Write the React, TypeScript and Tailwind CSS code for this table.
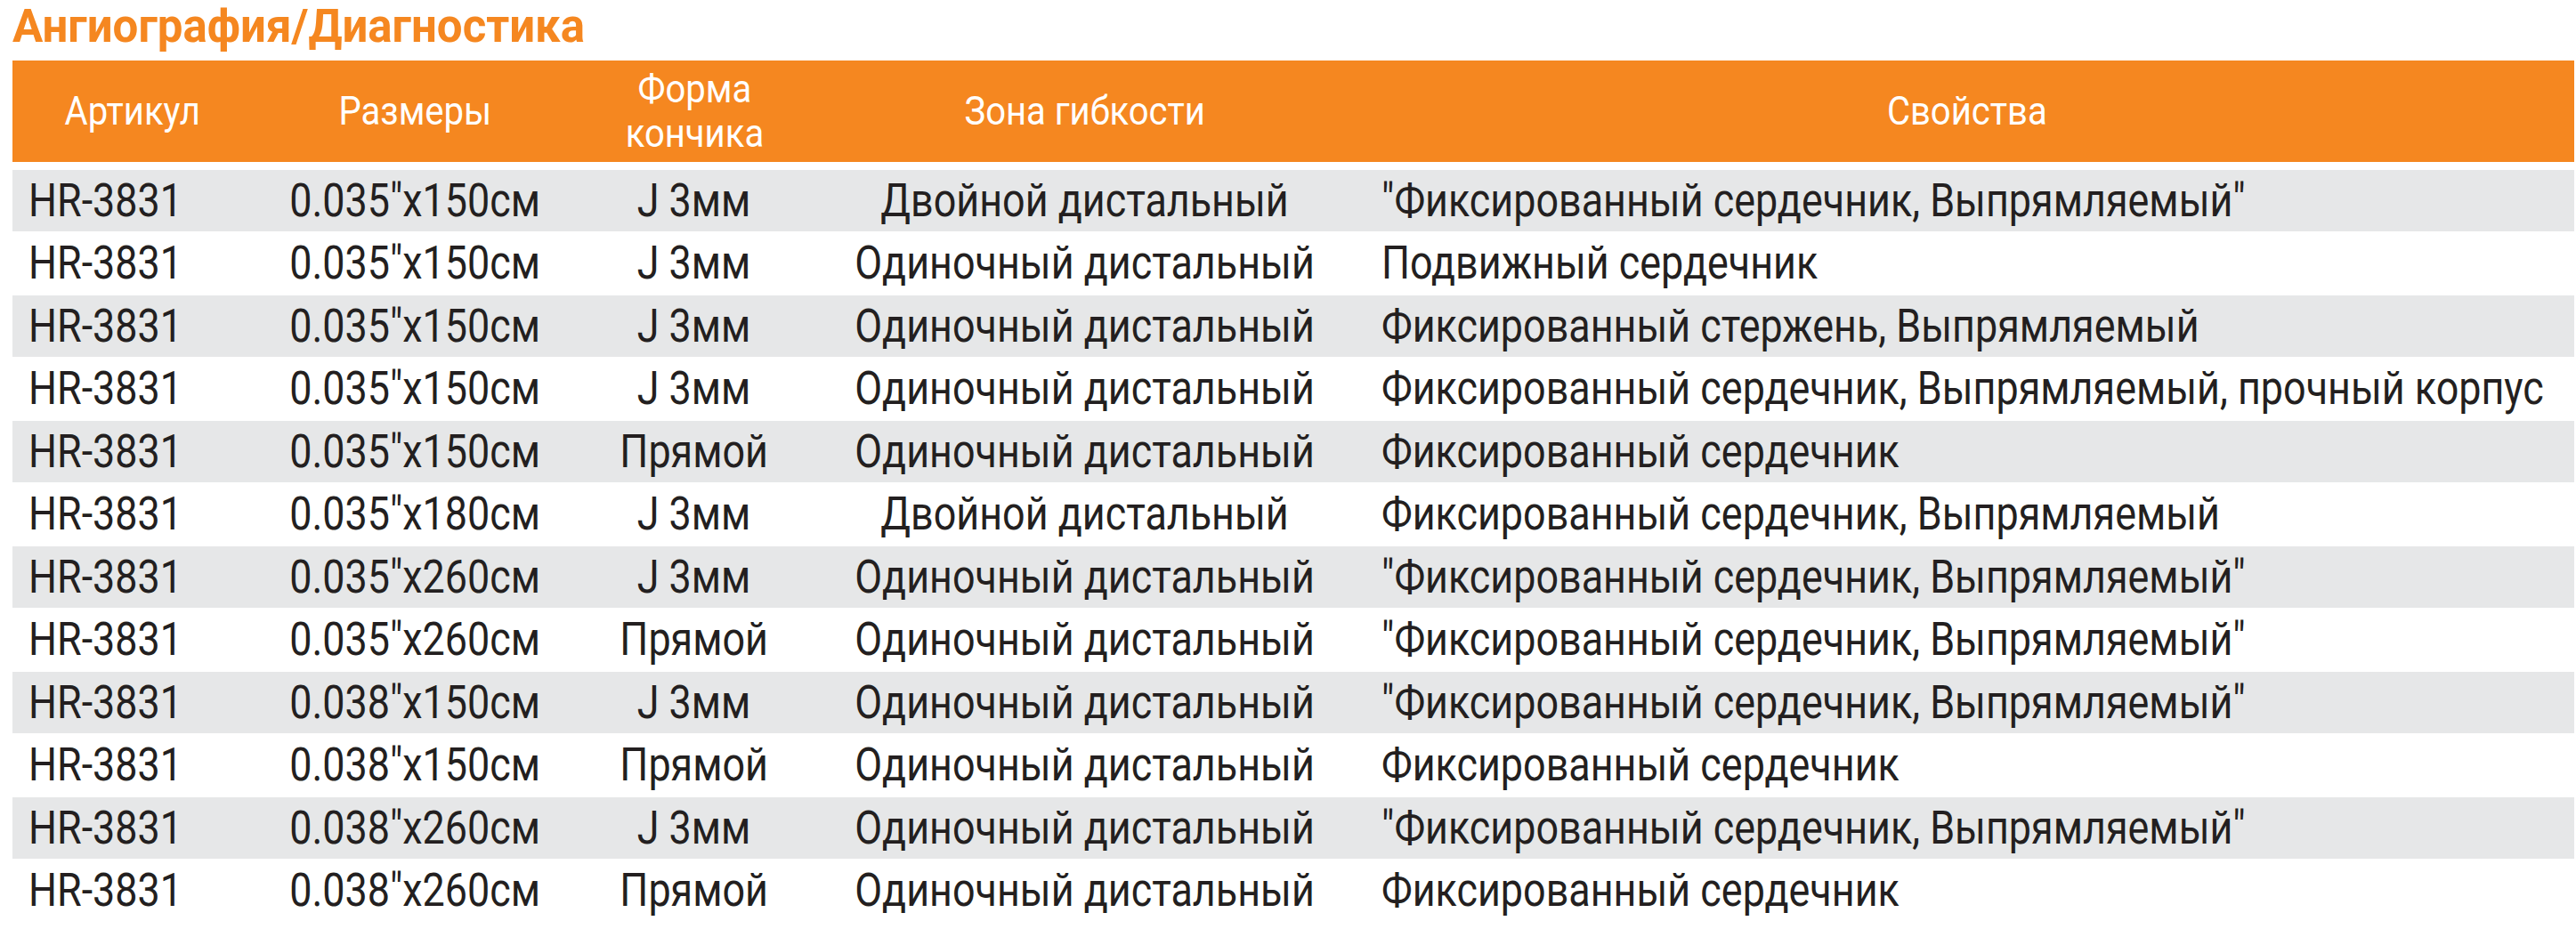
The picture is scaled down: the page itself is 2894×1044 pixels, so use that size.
import React from 'react';

// --- Data ---

type Row = [string, string, string, string, string];

const rows: Row[] = [
  ['HR-3831', '0.035"x150см', 'J 3мм', 'Двойной дистальный', '"Фиксированный сердечник, Выпрямляемый"'],
  ['HR-3831', '0.035"x150см', 'J 3мм', 'Одиночный дистальный', 'Подвижный сердечник'],
  ['HR-3831', '0.035"x150см', 'J 3мм', 'Одиночный дистальный', 'Фиксированный стержень, Выпрямляемый'],
  ['HR-3831', '0.035"x150см', 'J 3мм', 'Одиночный дистальный', 'Фиксированный сердечник, Выпрямляемый, прочный корпус'],
  ['HR-3831', '0.035"x150см', 'Прямой', 'Одиночный дистальный', 'Фиксированный сердечник'],
  ['HR-3831', '0.035"x180см', 'J 3мм', 'Двойной дистальный', 'Фиксированный сердечник, Выпрямляемый'],
  ['HR-3831', '0.035"x260см', 'J 3мм', 'Одиночный дистальный', '"Фиксированный сердечник, Выпрямляемый"'],
  ['HR-3831', '0.035"x260см', 'Прямой', 'Одиночный дистальный', '"Фиксированный сердечник, Выпрямляемый"'],
  ['HR-3831', '0.038"x150см', 'J 3мм', 'Одиночный дистальный', '"Фиксированный сердечник, Выпрямляемый"'],
  ['HR-3831', '0.038"x150см', 'Прямой', 'Одиночный дистальный', 'Фиксированный сердечник'],
  ['HR-3831', '0.038"x260см', 'J 3мм', 'Одиночный дистальный', '"Фиксированный сердечник, Выпрямляемый"'],
  ['HR-3831', '0.038"x260см', 'Прямой', 'Одиночный дистальный', 'Фиксированный сердечник'],
];

const cols = 'grid grid-cols-[270px_365px_262px_616px_1fr]';

// condensed look: the catalogue face is narrower than Roboto
const Cell: React.FC<{ text: string; left?: boolean; pad?: string }> = ({ text, left, pad }) => (
  <div className={`flex items-center ${left ? pad : 'justify-center'}`}>
    <span className={`inline-block scale-x-[0.88] ${left ? 'origin-left' : 'origin-center'}`}>{text}</span>
  </div>
);

const Head: React.FC<{ children: React.ReactNode }> = ({ children }) => (
  <div className="flex items-center justify-center">
    <span className="inline-block scale-x-[0.91] origin-center">{children}</span>
  </div>
);

// --- Main ---

const App: React.FC = () => (
  <div className="w-[2894px] h-[1044px] bg-white overflow-hidden font-['Roboto',sans-serif] text-[#231f20]">
    <div className="h-[68px] pl-[14px]">
      <h1 className="text-[51px] leading-[60px] font-bold text-[#f58720]">Ангиография/Диагностика</h1>
    </div>

    <div className="ml-[14px] w-[2878px]">
      <div className={`${cols} h-[114px] bg-[#f58720] text-white text-[44px] leading-[50px] text-center`}>
        <Head>Артикул</Head>
        <Head>Размеры</Head>
        <Head>Форма<br />кончика</Head>
        <Head>Зона гибкости</Head>
        <Head>Свойства</Head>
      </div>

      <div className="mt-[8px]">
        {rows.map((r, i) => (
          <div
            key={i}
            className={`${cols} h-[70.5px] border-y-[1.5px] border-white text-[51px] leading-none whitespace-nowrap ${i % 2 === 0 ? 'bg-[#e6e7e8]' : 'bg-white'}`}
          >
            <Cell text={r[0]} left pad="pl-[18px]" />
            <Cell text={r[1]} />
            <Cell text={r[2]} />
            <Cell text={r[3]} />
            <Cell text={r[4]} left pad="pl-[25px]" />
          </div>
        ))}
      </div>
    </div>
  </div>
);

export default App;
